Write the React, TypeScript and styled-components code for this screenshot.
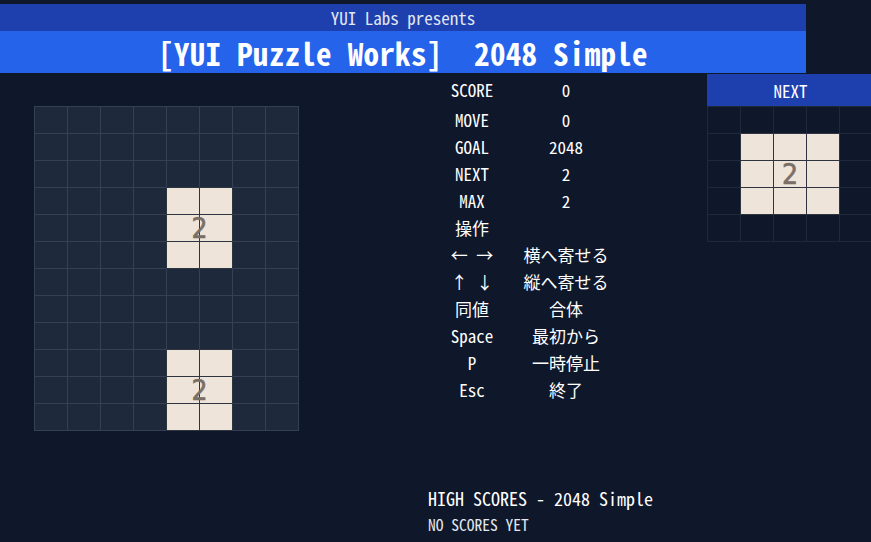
import { createGlobalStyle } from 'styled-components';
import styled from 'styled-components';

const GlobalStyle = createGlobalStyle`
  html, body {
    margin: 0;
    padding: 0;
    background: #0f172a;
    overflow: hidden;
  }
  body {
    width: 871px;
    height: 542px;
    font-family: "Noto Sans Mono CJK JP", "Noto Sans CJK JP", "DejaVu Sans Mono", monospace;
    color: #ffffff;
  }
`;

type Tile = { row: number; col: number; w: number; h: number; value: number };

const BOARD_ROWS = 12;
const BOARD_COLS = 8;
const boardTiles: Tile[] = [
  { row: 3, col: 4, w: 2, h: 3, value: 2 },
  { row: 9, col: 4, w: 2, h: 3, value: 2 },
];

const NEXT_ROWS = 5;
const NEXT_COLS = 5;
const nextTiles: Tile[] = [{ row: 1, col: 1, w: 3, h: 3, value: 2 }];

const infoRows: [string, string][] = [
  ['SCORE', '0'],
  ['MOVE', '0'],
  ['GOAL', '2048'],
  ['NEXT', '2'],
  ['MAX', '2'],
  ['操作', ''],
  ['←\u00a0→', '横へ寄せる'],
  ['↑\u00a0↓', '縦へ寄せる'],
  ['同値', '合体'],
  ['Space', '最初から'],
  ['P', '一時停止'],
  ['Esc', '終了'],
];

const Page = styled.div`
  padding-top: 4px;
`;

const Header = styled.header`
  width: 806px;
`;

const SubTitle = styled.div`
  height: 27px;
  background: #1e40af;
  display: flex;
  align-items: center;
  justify-content: center;
  font-size: 17px;
  color: #e2e8f0;
`;

const Title = styled.h1`
  margin: 0;
  height: 42px;
  background: #2563eb;
  display: flex;
  align-items: center;
  justify-content: center;
  font-size: 31px;
  font-weight: 700;
  white-space: pre;
  letter-spacing: 0.3px;
`;

const Main = styled.main`
  display: flex;
  align-items: flex-start;
`;

const BoardWrap = styled.section`
  flex: none;
  margin-left: 34px;
  margin-top: 33px;
`;

const Grid = styled.div<{ $cols: number; $rows: number; $line: string }>`
  display: grid;
  grid-template-columns: repeat(${(p) => p.$cols}, 32px);
  grid-template-rows: repeat(${(p) => p.$rows}, 26px);
  gap: 1px;
  padding: 1px;
  background: ${(p) => p.$line};
  width: max-content;
`;

const Cell = styled.div<{ $r: number; $c: number; $filled: boolean; $empty: string }>`
  grid-row: ${(p) => p.$r + 1};
  grid-column: ${(p) => p.$c + 1};
  background: ${(p) => (p.$filled ? '#eee4da' : p.$empty)};
  box-shadow: ${(p) => (p.$filled ? '0 0 0 1px #2f3540' : 'none')};
  position: relative;
  z-index: ${(p) => (p.$filled ? 1 : 0)};
`;

const TileLabel = styled.div<{ $r: number; $c: number; $w: number; $h: number }>`
  grid-row: ${(p) => `${p.$r + 1} / span ${p.$h}`};
  grid-column: ${(p) => `${p.$c + 1} / span ${p.$w}`};
  display: flex;
  align-items: center;
  justify-content: center;
  z-index: 2;
  font-family: "Liberation Sans Narrow", "DejaVu Sans Condensed", "Liberation Sans", sans-serif;
  font-size: 28px;
  font-weight: 400;
  -webkit-text-stroke: 0.6px #7a6f66;
  color: #7a6f66;
  pointer-events: none;
`;

const Info = styled.section`
  flex: none;
  width: 188px;
  margin-left: 128px;
  padding-top: 3px;
  display: flex;
  flex-direction: column;
`;

const InfoRow = styled.div<{ $first?: boolean }>`
  display: flex;
  height: 27px;
  align-items: center;
  margin-bottom: ${(p) => (p.$first ? '3px' : '0')};
  font-size: 17px;
  font-weight: 500;
`;

const InfoLabel = styled.div`
  width: 90px;
  text-align: center;
`;

const InfoValue = styled.div`
  width: 98px;
  text-align: center;
`;

const HighScores = styled.div`
  margin-top: 82px;
  margin-left: 1px;
`;

const HighTitle = styled.div`
  height: 26px;
  display: flex;
  align-items: center;
  font-size: 18px;
  font-weight: 500;
  white-space: nowrap;
`;

const HighEmpty = styled.div`
  height: 26px;
  display: flex;
  align-items: center;
  font-size: 15.5px;
  color: #e2e8f0;
  white-space: nowrap;
`;

const NextPanel = styled.aside`
  flex: none;
  margin-left: 92px;
  margin-top: 1px;
`;

const NextHeader = styled.div`
  height: 32px;
  width: 167px;
  background: #1e40af;
  display: flex;
  align-items: center;
  justify-content: center;
  font-size: 17px;
  font-weight: 500;
`;

const inTile = (tiles: Tile[], r: number, c: number) =>
  tiles.some((t) => r >= t.row && r < t.row + t.h && c >= t.col && c < t.col + t.w);

type BoardProps = {
  rows: number;
  cols: number;
  tiles: Tile[];
  line: string;
  empty: string;
};

const Board = ({ rows, cols, tiles, line, empty }: BoardProps): JSX.Element => {
  const cells = [];
  for (let r = 0; r < rows; r++) {
    for (let c = 0; c < cols; c++) {
      cells.push(<Cell key={`${r}-${c}`} $r={r} $c={c} $filled={inTile(tiles, r, c)} $empty={empty} />);
    }
  }

  return (
    <Grid $cols={cols} $rows={rows} $line={line}>
      {cells}
      {tiles.map((t, i) => (
        <TileLabel key={i} $r={t.row} $c={t.col} $w={t.w} $h={t.h}>
          {t.value}
        </TileLabel>
      ))}
    </Grid>
  );
};

const App = (): JSX.Element => {
  return (
    <>
      <GlobalStyle />
      <Page>
        <Header>
          <SubTitle>YUI Labs presents</SubTitle>
          <Title>{'[YUI Puzzle Works]  2048 Simple'}</Title>
        </Header>
        <Main>
          <BoardWrap>
            <Board rows={BOARD_ROWS} cols={BOARD_COLS} tiles={boardTiles} line="#334155" empty="#1e293b" />
          </BoardWrap>
          <Info>
            {infoRows.map(([label, value], i) => (
              <InfoRow key={label} $first={i === 0}>
                <InfoLabel>{label}</InfoLabel>
                <InfoValue>{value}</InfoValue>
              </InfoRow>
            ))}
            <HighScores>
              <HighTitle>HIGH SCORES - 2048 Simple</HighTitle>
              <HighEmpty>NO SCORES YET</HighEmpty>
            </HighScores>
          </Info>
          <NextPanel>
            <NextHeader>NEXT</NextHeader>
            <Board rows={NEXT_ROWS} cols={NEXT_COLS} tiles={nextTiles} line="#1e293b" empty="#0f172a" />
          </NextPanel>
        </Main>
      </Page>
    </>
  );
};

export default App;
